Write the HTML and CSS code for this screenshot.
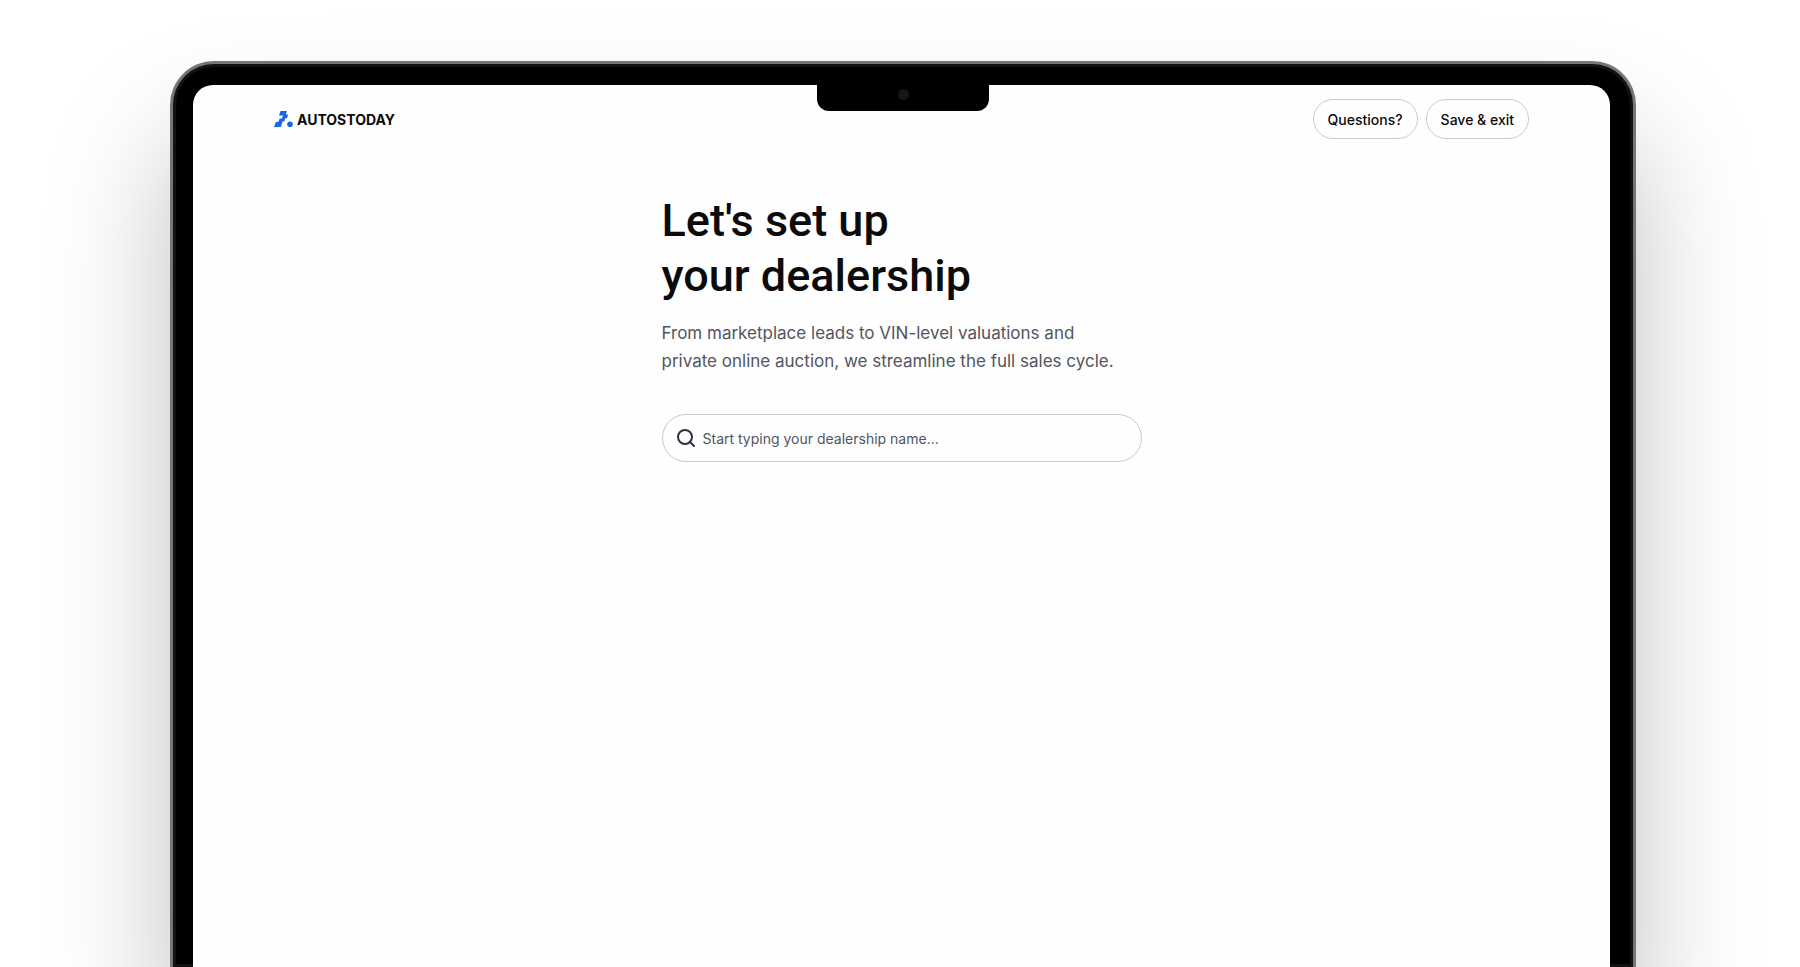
FILE: index.html
```html
<!DOCTYPE html>
<html lang="en">

<head>
    <meta charset="UTF-8" />
    <meta name="viewport" content="width=device-width, initial-scale=1" />
    <title>Autostoday</title>
    <link rel="stylesheet" href="styles.css">
</head>

<body>

    <div class="laptop">
        <div class="notch"><span class="camera"></span></div>

        <div class="screen">
            <header class="topbar">
                <a class="logo" href="#">
                    <svg class="logo-mark" viewBox="0 0 20 18" aria-hidden="true">
                        <path fill="#1a66e8" d="M6.5 1h6.5l-1.2 3.5h2.4l-1.3 3.7h-1.5l-1.2 3.3H8.6L6.8 17H0l1.8-5h2.4l1.5-3.6h2.2l1.1-3H5z" />
                        <circle fill="#1a66e8" cx="16" cy="14.3" r="2.8" />
                    </svg>
                    <span>AUTOSTODAY</span>
                </a>
                <nav class="actions">
                    <button type="button">Questions?</button>
                    <button type="button">Save &amp; exit</button>
                </nav>
            </header>

            <main class="setup">
                <h1>Let's set up<br>your dealership</h1>
                <p>From marketplace leads to VIN-level valuations and<br>private online auction, we streamline the full sales cycle.</p>
                <label class="search">
                    <svg viewBox="0 0 18 18" aria-hidden="true">
                        <circle cx="8" cy="8" r="7" />
                        <path d="M13 13l4 4" />
                    </svg>
                    <input type="text" aria-label="Dealership name" placeholder="Start typing your dealership name...">
                </label>
            </main>
        </div>
    </div>

</body>

</html>
```
FILE: styles.css
```css
* {
    box-sizing: border-box;
}
html,
body {
    margin: 0;
    height: 100%;
}
body {
    display: flex;
    padding: 61px 164px 0 170px;
    background: #fff;
    font-family: Inter, sans-serif;
    color: #0b0b0c;
    overflow: hidden;
}

/* laptop frame */
.laptop {
    position: relative;
    flex: 1;
    padding: 21px 23px 0 20px;
    background: #000;
    border: 3px solid #747677;
    border-bottom: 0;
    border-radius: 44px 44px 0 0;
    box-shadow: inset 0 0 0 3px #111214, 0 80px 120px rgba(0, 0, 0, 0.25);
}
.notch {
    position: absolute;
    top: 3px;
    left: 50%;
    display: flex;
    justify-content: center;
    width: 172px;
    height: 44px;
    padding-top: 22px;
    background: #000;
    border-radius: 0 0 12px 12px;
    transform: translateX(-50%);
}
.camera {
    width: 11px;
    height: 11px;
    background: #161616;
    border-radius: 50%;
}
.screen {
    height: 100%;
    padding: 14px 81px 0;
    background: #fefefe;
    border-radius: 20px 20px 0 0;
}

/* top bar */
.topbar {
    display: flex;
    justify-content: space-between;
    align-items: center;
}
.logo {
    display: flex;
    align-items: center;
    gap: 3px;
    color: #0b0b0c;
    font-size: 14px;
    font-weight: 700;
    text-decoration: none;
}
.logo-mark {
    width: 20px;
    height: 18px;
}
.actions {
    display: flex;
    gap: 8px;
}
.actions button {
    height: 40px;
    padding: 0 14px;
    background: #fefefe;
    border: 1px solid #ccc;
    border-radius: 20px;
    color: #0b0b0c;
    font: 500 14px Inter, sans-serif;
    cursor: pointer;
}

/* setup form */
.setup {
    width: 480px;
    margin: 54px auto 0;
}
h1 {
    margin: 0 0 16px;
    font: 500 45px/55px Roboto, sans-serif;
}
p {
    margin: 0 0 39px;
    color: #52555f;
    font-size: 17px;
    line-height: 28px;
    white-space: nowrap;
}
.search {
    display: flex;
    align-items: center;
    gap: 8px;
    height: 48px;
    padding: 0 14px;
    border: 1px solid #c8c9cb;
    border-radius: 24px;
}
.search svg {
    width: 18px;
    height: 18px;
    fill: none;
    stroke: #2b3242;
    stroke-width: 2;
    stroke-linecap: round;
}
.search input {
    flex: 1;
    padding: 0;
    background: none;
    border: 0;
    outline: 0;
    font: 14px Inter, sans-serif;
}
.search input::placeholder {
    color: #52555f;
}
```
